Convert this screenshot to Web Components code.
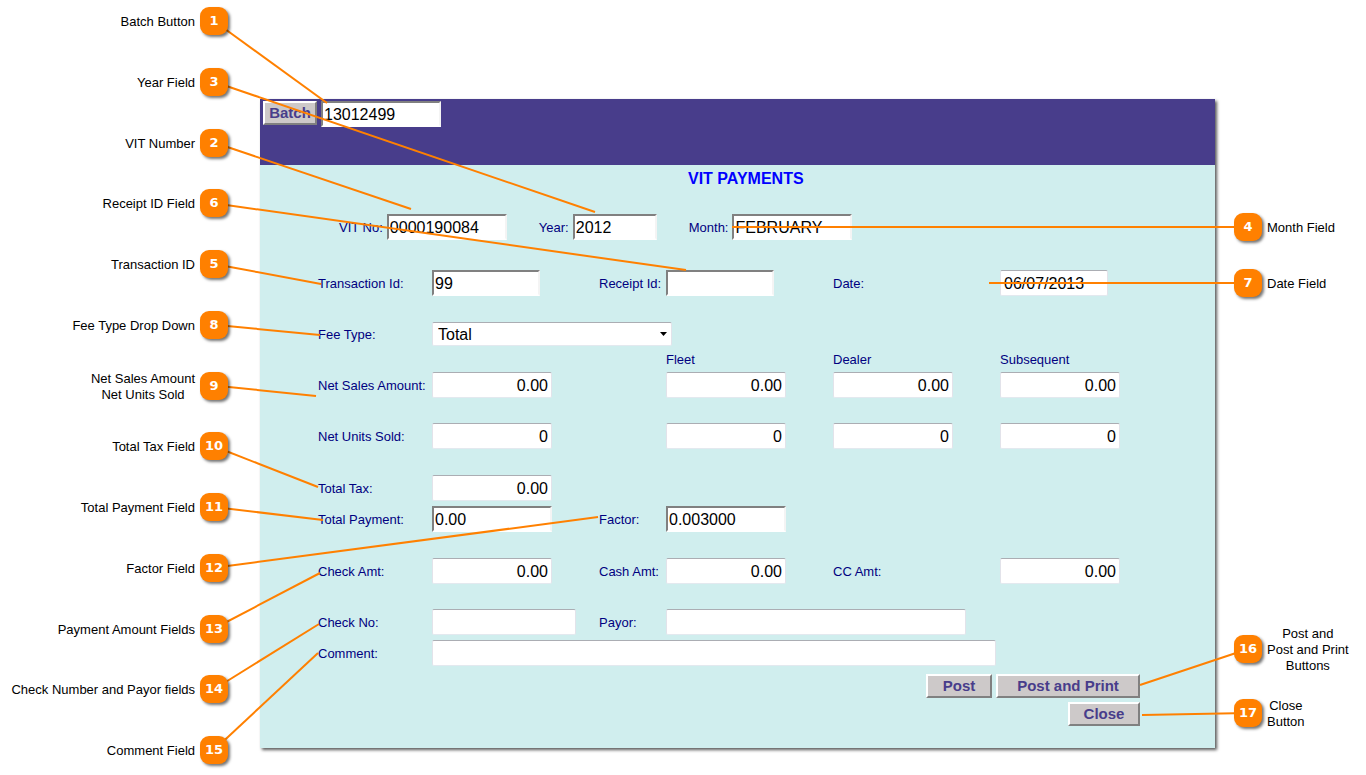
<!DOCTYPE html>
<html lang="en">
<head>
<meta charset="utf-8">
<meta name="viewport" content="width=device-width, initial-scale=1">
<title>VIT Payments</title>
<style>
    body { margin: 0; background: #fff; font-family: 'Liberation Sans', Arial, sans-serif; font-size: 13px; line-height: 16px; }
</style>
</head>
<body>

<annotated-stage>
    <call-out slot="left" number="1" to="67,4">Batch Button</call-out>
    <call-out slot="left" number="3" to="335,113">Year Field</call-out>
    <call-out slot="left" number="2" to="151,110">VIT Number</call-out>
    <call-out slot="left" number="6" to="426,171">Receipt ID Field</call-out>
    <call-out slot="left" number="5" to="61,185">Transaction ID</call-out>
    <call-out slot="left" number="8" to="60,236">Fee Type Drop Down</call-out>
    <call-out slot="left" number="9" to="56,297">Net Sales Amount<br>Net Units Sold</call-out>
    <call-out slot="left" number="10" to="58,388">Total Tax Field</call-out>
    <call-out slot="left" number="11" to="63,421">Total Payment Field</call-out>
    <call-out slot="left" number="12" to="338,418">Factor Field</call-out>
    <call-out slot="left" number="13" to="60,474">Payment Amount Fields</call-out>
    <call-out slot="left" number="14" to="59,525">Check Number and Payor fields</call-out>
    <call-out slot="left" number="15" to="58,554">Comment Field</call-out>

    <payments-panel></payments-panel>

    <call-out slot="right" side="right" number="4" to="472,128">Month Field</call-out>
    <call-out slot="right" side="right" number="7" to="729,184" style="margin-top: 22px">Date Field</call-out>
    <call-out slot="right" side="right" number="16" to="-75,586" style="margin-top: 324px">Post and<br>Post and Print<br>Buttons</call-out>
    <call-out slot="right" side="right" number="17" to="-73,616" style="margin-top: 22px">Close<br>Button</call-out>
</annotated-stage>

<script>
class CallOut extends HTMLElement {
    constructor() {
        super();
        this.attachShadow({ mode: 'open' });
    }

    connectedCallback() {
        this.shadowRoot.innerHTML = `
            <style>
                :host { display: flex; align-items: center; justify-content: flex-end; gap: 5px; min-height: 34px; }
                :host([side="right"]) { flex-direction: row-reverse; }
                .text { padding-top: 2px; text-align: center; color: #000; }
                .badge { position: relative; z-index: 2; flex: none; width: 28px; height: 28px; line-height: 28px; border-radius: 9px;
                    background: #ff8000; color: #fff; text-align: center; font-family: 'DejaVu Sans', Verdana, sans-serif;
                    font-weight: bold; font-size: 13px; box-shadow: 2px 2px 3px rgba(0,0,0,0.55); }
            </style>
            <span class="text"><slot></slot></span>
            <span class="badge">${this.getAttribute('number')}</span>
        `;
    }

    get badge() {
        return this.shadowRoot.querySelector('.badge');
    }
}

class FormButton extends HTMLElement {
    constructor() {
        super();
        this.attachShadow({ mode: 'open' });
    }

    connectedCallback() {
        this.shadowRoot.innerHTML = `
            <style>
                :host { display: block; }
                button { display: block; box-sizing: border-box; min-width: var(--width, 66px); height: 24px; padding: 0 4px; border: 2px solid;
                    border-color: #fff #808080 #808080 #fff; background: #cdc9c9; color: #483d8b;
                    font-family: inherit; font-weight: bold; font-size: 15px; line-height: 16px; }
            </style>
            <button type="button"><slot></slot></button>
        `;
    }
}

// label and control become cells of the surrounding row
class FormField extends HTMLElement {
    constructor() {
        super();
        this.attachShadow({ mode: 'open' });
    }

    connectedCallback() {
        const label = this.getAttribute('label');
        const name = this.getAttribute('name') || '';
        const value = this.getAttribute('value') || '';
        const width = this.getAttribute('width') || '120';
        const column = this.getAttribute('column') || 'auto';

        this.shadowRoot.innerHTML = `
            <style>
                :host { display: contents; }
                label { padding-top: 2px; color: #000080; white-space: nowrap; }
                input { box-sizing: border-box; width: ${width}px; height: 26px; margin: 0; grid-column: ${column}; justify-self: start;
                    padding: 1px 3px 0; border: 1px solid; border-color: #abadb3 #e2e3ea #e3e9ef #e2e3ea; border-radius: 2px;
                    background: #fff; color: #000; font-family: inherit; font-size: 16px; }
                :host([inset]) input { padding: 1px 1px 0; border: 2px solid; border-color: #808080 #f4f4f4 #fff #808080; border-radius: 0; }
                :host([numeric]) input { text-align: right; }
            </style>
            ${label ? `<label for="control">${label}</label>` : ''}
            <input id="control" type="text" value="${value}" ${label ? '' : `aria-label="${name}"`}>
        `;
    }
}

class FormSelect extends HTMLElement {
    constructor() {
        super();
        this.attachShadow({ mode: 'open' });
    }

    connectedCallback() {
        this.shadowRoot.innerHTML = `
            <style>
                :host { display: contents; }
                label { padding-top: 2px; color: #000080; }
                .box { display: grid; align-items: center; grid-column: 2 / span 3; justify-self: start; width: 240px; }
                .box > * { grid-area: 1 / 1; }
                select { appearance: none; box-sizing: border-box; width: 100%; height: 24px; margin: 0; padding: 0 5px; border: 1px solid;
                    border-color: #abadb3 #e2e3ea #e3e9ef #e2e3ea; border-radius: 2px; background: #fff; color: #000;
                    font-family: inherit; font-size: 16px; }
                svg { justify-self: end; margin-right: 5px; pointer-events: none; }
            </style>
            <label for="control">${this.getAttribute('label')}</label>
            <div class="box">
                <select id="control"><option>${this.getAttribute('value')}</option></select>
                <svg width="7" height="4" viewBox="0 0 7 4"><path d="M0 0h7L3.5 4z"/></svg>
            </div>
        `;
    }
}

class PaymentsPanel extends HTMLElement {
    constructor() {
        super();
        this.attachShadow({ mode: 'open' });
    }

    connectedCallback() {
        this.shadowRoot.innerHTML = `
            <style>
                :host { display: block; background: #d0eeee; box-shadow: 2px 2px 3px rgba(0,0,0,0.65); }
                header { display: flex; align-items: flex-start; gap: 4px; box-sizing: border-box; min-height: 66px; padding: 2px 3px; background: #483d8b; }
                header form-button { --width: 54px; }
                form { padding: 5px 75px 22px 58px; }
                h1 { margin: 0 0 26px 370px; color: #0000ff; font-size: 16px; line-height: 18px; }
                .period { display: flex; align-items: center; gap: 32px; padding-left: 21px; }
                .pair { display: flex; align-items: center; gap: 4px; }
                .row { display: grid; grid-template-columns: 114px 167px 67px 167px 167px 1fr; align-items: center; margin-top: 26px; }
                .row.wide { margin-top: 30px; }
                .row.close { margin-top: 25px; }
                .row.tight { margin-top: 5px; }
                .heads { color: #000080; }
                .heads span { padding-top: 2px; line-height: 14px; }
                .heads span:first-child { grid-column: 4; }
                .actions { display: flex; justify-content: flex-end; gap: 4px; margin-top: 8px; }
                .actions + .actions { margin-top: 4px; }
                .close-button { --width: 72px; }
                .print { --width: 144px; }
            </style>
            <header>
                <form-button>Batch</form-button>
                <form-field inset name="Batch number" value="13012499"></form-field>
            </header>
            <form>
                <h1>VIT PAYMENTS</h1>
                <div class="period">
                    <div class="pair"><form-field inset label="VIT No:" value="0000190084"></form-field></div>
                    <div class="pair"><form-field inset label="Year:" value="2012" width="84"></form-field></div>
                    <div class="pair"><form-field inset label="Month:" value="FEBRUARY"></form-field></div>
                </div>
                <div class="row wide">
                    <form-field inset label="Transaction Id:" value="99" width="108"></form-field>
                    <form-field inset label="Receipt Id:" width="108"></form-field>
                    <form-field label="Date:" value="06/07/2013" width="108"></form-field>
                </div>
                <div class="row">
                    <form-select label="Fee Type:" value="Total"></form-select>
                </div>
                <div class="row tight heads">
                    <span>Fleet</span><span>Dealer</span><span>Subsequent</span>
                </div>
                <div class="row tight">
                    <form-field numeric label="Net Sales Amount:" value="0.00"></form-field>
                    <form-field numeric name="Fleet net sales amount" value="0.00" column="4"></form-field>
                    <form-field numeric name="Dealer net sales amount" value="0.00"></form-field>
                    <form-field numeric name="Subsequent net sales amount" value="0.00"></form-field>
                </div>
                <div class="row close">
                    <form-field numeric label="Net Units Sold:" value="0"></form-field>
                    <form-field numeric name="Fleet net units sold" value="0" column="4"></form-field>
                    <form-field numeric name="Dealer net units sold" value="0"></form-field>
                    <form-field numeric name="Subsequent net units sold" value="0"></form-field>
                </div>
                <div class="row">
                    <form-field numeric label="Total Tax:" value="0.00"></form-field>
                </div>
                <div class="row tight">
                    <form-field inset label="Total Payment:" value="0.00"></form-field>
                    <form-field inset label="Factor:" value="0.003000"></form-field>
                </div>
                <div class="row">
                    <form-field numeric label="Check Amt:" value="0.00"></form-field>
                    <form-field numeric label="Cash Amt:" value="0.00"></form-field>
                    <form-field numeric label="CC Amt:" value="0.00"></form-field>
                </div>
                <div class="row close">
                    <form-field label="Check No:" width="144"></form-field>
                    <form-field label="Payor:" width="300" column="4 / -1"></form-field>
                </div>
                <div class="row tight">
                    <form-field label="Comment:" width="564" column="2 / -1"></form-field>
                </div>
                <div class="actions">
                    <form-button>Post</form-button>
                    <form-button class="print">Post and Print</form-button>
                </div>
                <div class="actions">
                    <form-button class="close-button">Close</form-button>
                </div>
            </form>
        `;
    }
}

class AnnotatedStage extends HTMLElement {
    constructor() {
        super();
        this.attachShadow({ mode: 'open' });
    }

    connectedCallback() {
        this.shadowRoot.innerHTML = `
            <style>
                :host { display: grid; grid-template-columns: 260px 1fr 151px; position: relative; min-height: 100vh; }
                .left { display: flex; flex-direction: column; justify-content: space-between; box-sizing: border-box; padding: 4px 32px 8px 0; }
                .middle { padding: 99px 0 27px; }
                .right { display: flex; flex-direction: column; box-sizing: border-box; padding: 210px 0 0 19px; }
                .right ::slotted(call-out) { align-self: flex-start; }
                svg { position: absolute; z-index: 1; inset: 0; width: 100%; height: 100%; pointer-events: none; }
                line { stroke: #ff8000; stroke-width: 2; }
            </style>
            <div class="left"><slot name="left"></slot></div>
            <div class="middle"><slot></slot></div>
            <div class="right"><slot name="right"></slot></div>
            <svg aria-hidden="true"></svg>
        `;
        this.drawLines();
        window.addEventListener('resize', () => this.drawLines());
    }

    // "to" is an x,y inside the panel; a negative x counts from its right edge
    drawLines() {
        const stage = this.getBoundingClientRect();
        const panel = this.querySelector('payments-panel').getBoundingClientRect();
        let lines = '';
        this.querySelectorAll('call-out').forEach((item) => {
            const badge = item.badge.getBoundingClientRect();
            const [x, y] = item.getAttribute('to').split(',').map(Number);
            const x1 = badge.left + badge.width / 2 - stage.left;
            const y1 = badge.top + badge.height / 2 - stage.top;
            const x2 = (x < 0 ? panel.right : panel.left) + x - stage.left;
            const y2 = panel.top + y - stage.top;
            lines += `<line x1="${x1}" y1="${y1}" x2="${x2}" y2="${y2}"/>`;
        });
        this.shadowRoot.querySelector('svg').innerHTML = lines;
    }
}

customElements.define('call-out', CallOut);
customElements.define('form-button', FormButton);
customElements.define('form-field', FormField);
customElements.define('form-select', FormSelect);
customElements.define('payments-panel', PaymentsPanel);
customElements.define('annotated-stage', AnnotatedStage);
</script>
</body>
</html>
